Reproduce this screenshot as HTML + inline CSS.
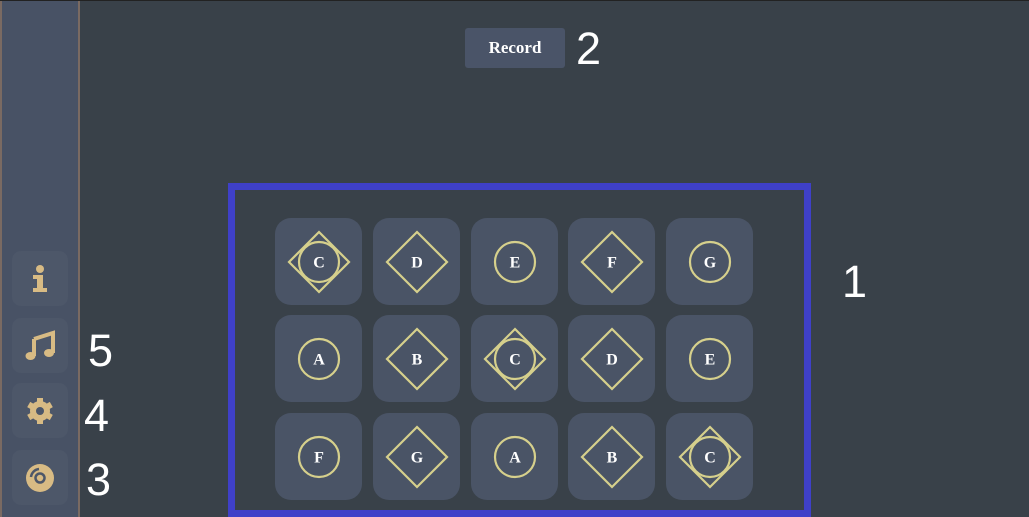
<!DOCTYPE html>
<html><head><style>
*{margin:0;padding:0;box-sizing:border-box}
html,body{width:1029px;height:517px;overflow:hidden}
body{background:#394149;position:relative;font-family:"Liberation Sans",sans-serif}
.top{position:absolute;left:0;top:0;width:1029px;height:1px;background:#222}
.side{position:absolute;left:0;top:1px;width:80px;height:516px;background:#485265;border-left:2px solid #7a6a62;border-right:2px solid #7a6a62}
.sb{position:absolute;left:12px;width:56px;height:55px;border-radius:9px;background:#4d5769;display:flex;align-items:center;justify-content:center}
.num{position:absolute;color:#fff;font-size:45px;font-family:"Liberation Sans",sans-serif;font-weight:400;line-height:1}
.rec{position:absolute;left:465px;top:28px;width:100px;height:40px;background:#4a5468;border-radius:3px;color:#fff;font:bold 17px "Liberation Serif",serif;display:flex;align-items:center;justify-content:center}
.box{position:absolute;left:228px;top:183px;width:583px;height:334px;border:7px solid #3f40c8}
.cell{position:absolute;width:87px;height:87px;border-radius:16px;background:#4a5466}
.cell svg{position:absolute;left:0;top:0}
</style></head><body>
<div class="top"></div>
<div class="side"></div>
<div class="sb" style="top:251px"><svg width="24" height="30" viewBox="0 0 24 30"><circle cx="12" cy="5" r="4" fill="#d8bb84"/><path d="M5 11h10v13h4v4H5v-4h4v-9H5z" fill="#d8bb84"/></svg></div>
<div class="sb" style="top:318px"><svg width="32" height="32" viewBox="0 0 32 32"><path d="M10 9 L29 3 V23 M10 9 V26" stroke="#d8bb84" stroke-width="4" fill="none"/><ellipse cx="6.5" cy="26" rx="5" ry="4" fill="#d8bb84"/><ellipse cx="25" cy="23" rx="5" ry="4" fill="#d8bb84"/></svg></div>
<div class="sb" style="top:383px"><svg width="30" height="30" viewBox="0 0 30 30"><g fill="#d8bb84"><circle cx="15" cy="15" r="10"/><g stroke="#d8bb84" stroke-width="6"><line x1="15" y1="2" x2="15" y2="28"/><line x1="3.7" y1="8.5" x2="26.3" y2="21.5"/><line x1="3.7" y1="21.5" x2="26.3" y2="8.5"/></g></g><circle cx="15" cy="15" r="4" fill="#4d5769"/></svg></div>
<div class="sb" style="top:450px"><svg width="30" height="30" viewBox="0 0 30 30"><circle cx="15" cy="15" r="14" fill="#d8bb84"/><circle cx="15" cy="15" r="4.5" fill="none" stroke="#4d5769" stroke-width="2.5"/><path d="M6 14 A9 9 0 0 1 14 6" stroke="#4d5769" stroke-width="2.5" fill="none"/></svg></div>
<div class="num" style="left:88px;top:328px">5</div>
<div class="num" style="left:84px;top:393px">4</div>
<div class="num" style="left:86px;top:457px">3</div>
<div class="rec">Record</div>
<div class="num" style="left:576px;top:26px">2</div>
<div class="num" style="left:842px;top:259px">1</div>
<div class="box"></div>
<div id="g"></div>
<script>
var t=[["C",3],["D",2],["E",1],["F",2],["G",1],["A",1],["B",2],["C",3],["D",2],["E",1],["F",1],["G",2],["A",1],["B",2],["C",3]];
var xs=[275,373,471,568,666],ys=[218,315,413],h="";
t.forEach(function(c,i){var x=xs[i%5],y=ys[Math.floor(i/5)];var s='<svg width="87" height="87">';
if(c[1]&2)s+='<polygon points="44,14 74,44 44,74 14,44" fill="none" stroke="#d6d08c" stroke-width="2.2"/>';
if(c[1]&1)s+='<circle cx="44" cy="44" r="20" fill="none" stroke="#d6d08c" stroke-width="2.2"/>';
s+='<text x="44" y="49.5" text-anchor="middle" fill="#fff" font-family="Liberation Serif,serif" font-weight="bold" font-size="16">'+c[0]+'</text></svg>';
h+='<div class="cell" style="left:'+x+'px;top:'+y+'px">'+s+'</div>';});
document.getElementById("g").innerHTML=h;
</script>
</body></html>
